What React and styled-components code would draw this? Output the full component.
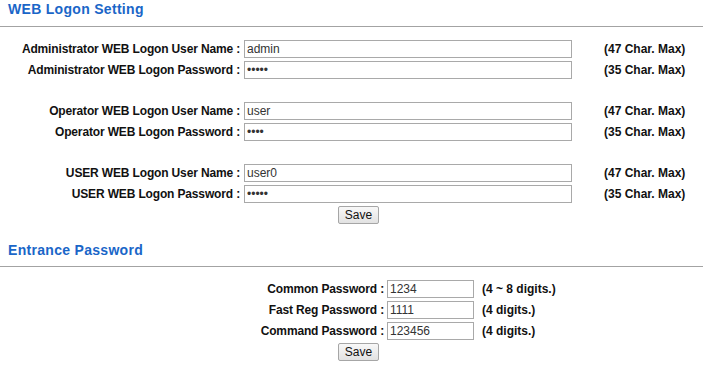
import React from 'react';
import styled, { createGlobalStyle } from 'styled-components';

const GlobalStyle = createGlobalStyle`
  body {
    margin: 0;
    background: #fff;
    font-family: "Liberation Sans", Arial, sans-serif;
    color: #111;
  }
`;

const Page = styled.div`
  width: 703px;
  padding-top: 1px;
`;

const SectionTitle = styled.h2`
  margin: ${props => props.$top || 0}px 0 13px;
  padding: ${props => props.$pad || 0}px 8px ${props => 9 - (props.$pad || 0)}px;
  font-size: 14px;
  line-height: 16px;
  font-weight: bold;
  letter-spacing: 0.3px;
  color: #1a66c8;
  border-bottom: 1px solid #a3a3a3;
`;

const FormGrid = styled.div`
  display: grid;
  grid-template-columns: ${props => props.$label}px ${props => props.$input}px auto;
  column-gap: ${props => props.$gap}px;
  row-gap: 3px;
  align-items: center;
`;

const Label = styled.label`
  text-align: right;
  font-size: 12px;
  font-weight: bold;
  line-height: 18px;
  letter-spacing: -0.15px;
  white-space: nowrap;
`;

const Input = styled.input`
  box-sizing: border-box;
  width: 100%;
  height: 18px;
  margin: 0;
  padding: 0 2px;
  border: 1px solid #a9a9a9;
  font-family: "Liberation Sans", Arial, sans-serif;
  font-size: 12px;
  color: #333;
  outline: none;
`;

const Hint = styled.span`
  padding-left: ${props => props.$indent}px;
  font-size: 12px;
  font-weight: bold;
  line-height: 18px;
  white-space: nowrap;
`;

const Spacer = styled.div`
  grid-column: 1 / -1;
  height: 17px;
`;

const ButtonRow = styled.div`
  grid-column: 1 / -1;
  display: flex;
  padding-left: 338px;
`;

const SaveButton = styled.button`
  box-sizing: border-box;
  width: 41px;
  height: 18px;
  padding: 0;
  border: 1px solid #a6a6a6;
  border-radius: 2px;
  background: linear-gradient(#f8f8f8, #e2e2e2);
  font-family: "Liberation Sans", Arial, sans-serif;
  font-size: 12px;
  color: #111;
  line-height: 16px;
`;

const logonGroups = [
  { role: 'Administrator', user: 'admin', pass: 'admin' },
  { role: 'Operator', user: 'user', pass: 'user' },
  { role: 'USER', user: 'user0', pass: 'user0' },
];

const entrance = [
  { label: 'Common Password :', value: '1234', hint: '(4 ~ 8 digits.)' },
  { label: 'Fast Reg Password :', value: '1111', hint: '(4 digits.)' },
  { label: 'Command Password :', value: '123456', hint: '(4 digits.)' },
];

export default function App() {
  return (
    <Page>
      <GlobalStyle />
      <SectionTitle>WEB Logon Setting</SectionTitle>
      <FormGrid $label={240} $input={328} $gap={4}>
        {logonGroups.map((g, i) => (
          <React.Fragment key={g.role}>
            {i > 0 && <Spacer />}
            <Label>{g.role} WEB Logon User Name :</Label>
            <Input type="text" defaultValue={g.user} />
            <Hint $indent={28}>(47 Char. Max)</Hint>
            <Label>{g.role} WEB Logon Password :</Label>
            <Input type="password" defaultValue={g.pass} />
            <Hint $indent={28}>(35 Char. Max)</Hint>
          </React.Fragment>
        ))}
        <ButtonRow>
          <SaveButton>Save</SaveButton>
        </ButtonRow>
      </FormGrid>

      <SectionTitle $top={17} $pad={1}>Entrance Password</SectionTitle>
      <FormGrid $label={384} $input={87} $gap={3}>
        {entrance.map(e => (
          <React.Fragment key={e.label}>
            <Label>{e.label}</Label>
            <Input type="text" defaultValue={e.value} />
            <Hint $indent={5}>{e.hint}</Hint>
          </React.Fragment>
        ))}
        <ButtonRow>
          <SaveButton>Save</SaveButton>
        </ButtonRow>
      </FormGrid>
    </Page>
  );
}
